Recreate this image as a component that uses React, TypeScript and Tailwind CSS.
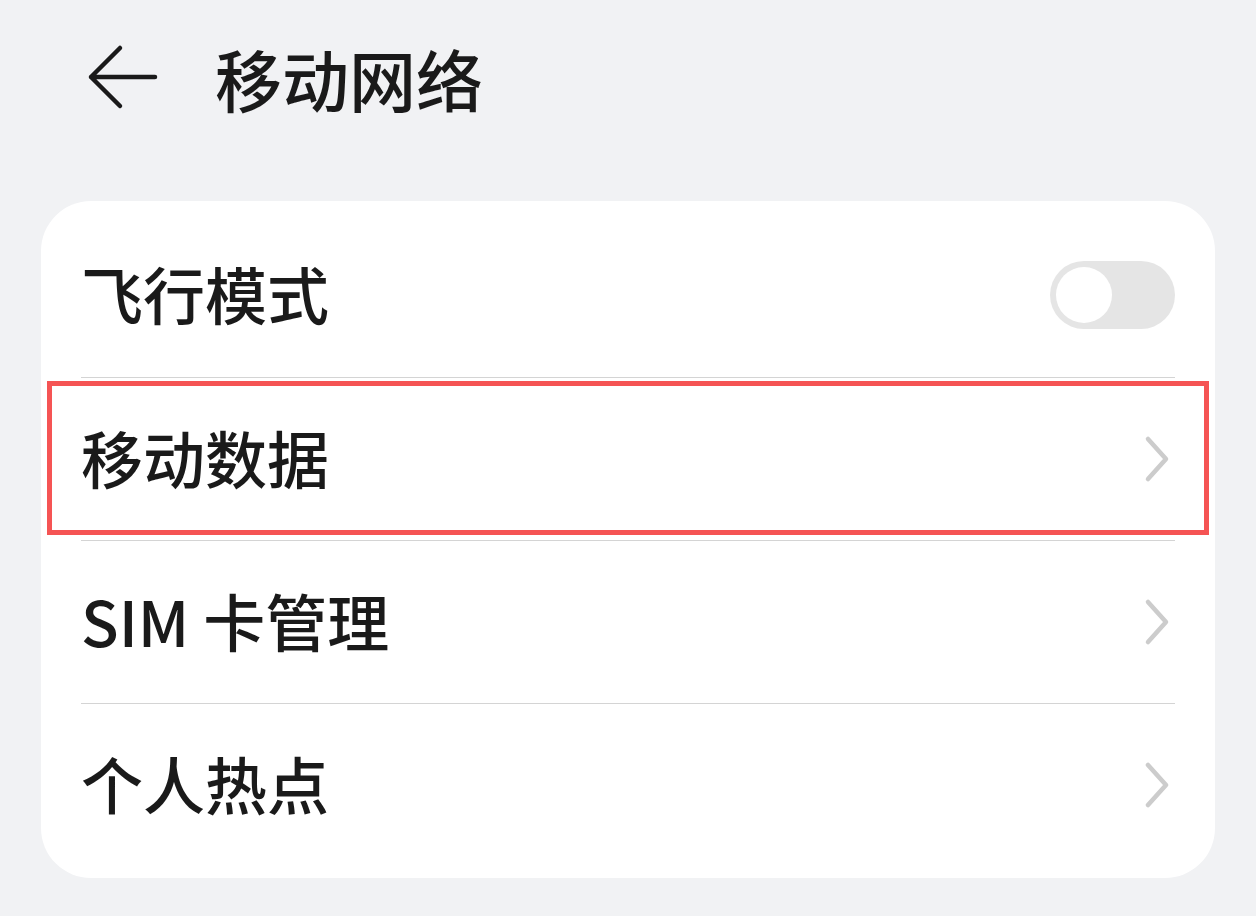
import React from 'react';

const font = { fontFamily: '"Noto Sans CJK SC", "Noto Sans", sans-serif' };

const Chevron = () => (
  <svg width="28" height="48" viewBox="0 0 28 48" fill="none" className="shrink-0">
    <path d="M5 4 L23 24 L5 44" stroke="#cccccc" strokeWidth="4.5" strokeLinecap="round" strokeLinejoin="round" />
  </svg>
);

const Toggle = () => (
  <div className="w-[125px] h-[68px] rounded-full bg-[#e5e5e5] p-[6px] flex items-center">
    <div className="w-[56px] h-[56px] rounded-full bg-white" />
  </div>
);

const Divider = () => <div className="mx-[40px] h-px bg-[#d4d4d4]" />;

const App = () => {
  const rows = [
    { label: '移动数据', highlight: true },
    { label: 'SIM 卡管理', highlight: false },
    { label: '个人热点', highlight: false },
  ];

  return (
    <div className="w-[1256px] h-[916px] bg-[#f1f2f4] text-[#1a1a1a] overflow-hidden" style={font}>
      {/* Header */}
      <div className="h-[160px] flex items-center pl-[86px] pb-[6px]">
        <svg width="72" height="66" viewBox="0 0 72 66" fill="none" className="mr-[57px]">
          <path d="M34 4 L5 33 L34 62 M5 33 L69 33" stroke="#1a1a1a" strokeWidth="4.5" strokeLinecap="round" strokeLinejoin="round" />
        </svg>
        <h1 className="text-[67px] font-medium leading-none">移动网络</h1>
      </div>

      {/* Card */}
      <div className="mx-[41px] mt-[41px] bg-white rounded-[50px] pt-[12px] pb-[12px]">
        <div className="h-[164px] px-[40px] flex items-center justify-between">
          <span className="text-[62px] font-medium leading-none -mt-[4px]">飞行模式</span>
          <Toggle />
        </div>
        {rows.map((row) => (
          <React.Fragment key={row.label}>
            <Divider />
            <div className="relative h-[162px] px-[40px] flex items-center justify-between">
              <span className="text-[62px] font-medium leading-none -mt-[4px]">{row.label}</span>
              <div className="mr-[4px]">
                <Chevron />
              </div>
              {row.highlight && (
                <div className="absolute left-[6px] right-[6px] top-[3px] bottom-[5px] border-[5px] border-[#f55454]" />
              )}
            </div>
          </React.Fragment>
        ))}
      </div>
    </div>
  );
};

export default App;
